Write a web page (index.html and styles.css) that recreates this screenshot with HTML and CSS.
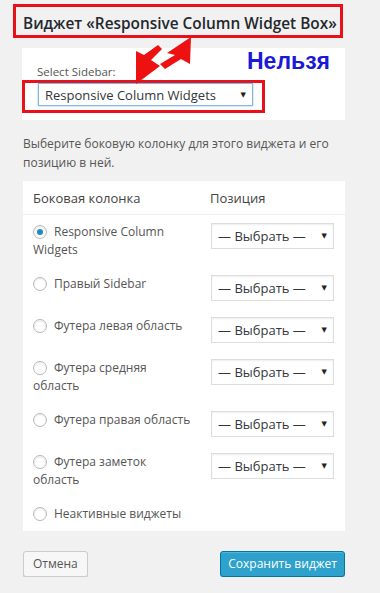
FILE: index.html
```html
<!DOCTYPE html>
<html lang="ru">
<head>
    <meta charset="UTF-8">
    <title>Виджет</title>
    <meta name="viewport" content="width=device-width, initial-scale=1.0">
    <link rel="stylesheet" href="styles.css">
</head>
<body>
    <div class="title-row">
        <h2 class="widget-title">Виджет «Responsive Column Widget Box»</h2>
    </div>

    <div class="sidebar-panel">
        <span class="note">Нельзя</span>
        <div class="field-label">Select Sidebar:</div>
        <div class="mark-box">
            <div class="select select-focus"><span>Responsive Column Widgets</span><span class="caret">▼</span></div>
        </div>
    </div>

    <p class="hint">Выберите боковую колонку для этого виджета и его позицию в ней.</p>

    <div class="positions">
        <div class="positions-head">
            <span>Боковая колонка</span>
            <span>Позиция</span>
        </div>
        <div class="positions-body">
            <div class="side"><span class="radio checked"></span>Responsive Column Widgets</div>
            <div class="select"><span>— Выбрать —</span><span class="caret">▼</span></div>

            <div class="side"><span class="radio"></span>Правый Sidebar</div>
            <div class="select"><span>— Выбрать —</span><span class="caret">▼</span></div>

            <div class="side"><span class="radio"></span>Футера левая область</div>
            <div class="select"><span>— Выбрать —</span><span class="caret">▼</span></div>

            <div class="side"><span class="radio"></span>Футера средняя область</div>
            <div class="select"><span>— Выбрать —</span><span class="caret">▼</span></div>

            <div class="side"><span class="radio"></span>Футера правая область</div>
            <div class="select"><span>— Выбрать —</span><span class="caret">▼</span></div>

            <div class="side"><span class="radio"></span>Футера заметок область</div>
            <div class="select"><span>— Выбрать —</span><span class="caret">▼</span></div>

            <div class="side"><span class="radio"></span>Неактивные виджеты</div>
        </div>
    </div>

    <div class="actions">
        <button class="btn">Отмена</button>
        <button class="btn btn-primary">Сохранить виджет</button>
    </div>

    <!-- red annotation arrows between title and sidebar select -->
    <svg class="arrows" width="380" height="120" viewBox="0 0 380 120">
        <polygon points="191,37 167,53 175,55 160,64 165,69 181,59 190,64" fill="#ee1111"/>
        <polygon points="136,84 136,51 144,55 158,45 162,49 151,60 160,66" fill="#ee1111"/>
    </svg>
</body>
</html>
```

FILE: styles.css
```css
body {
    margin: 0;
    background: #f1f1f1;
    font-family: 'Open Sans', 'DejaVu Sans', sans-serif;
    color: #555;
    position: relative;
}
.title-row {
    padding: 4px 0 0 13px;
}
.widget-title {
    margin: 0;
    width: 330px;
    height: 34px;
    box-sizing: border-box;
    border: 3px solid #e8111a;
    padding: 7px 0 0 7px;
    font-size: 15.4px;
    font-weight: 600;
    line-height: 20px;
    color: #23282d;
    white-space: nowrap;
}
.sidebar-panel {
    position: relative;
    margin: 10px 0 0 22px;
    width: 323px;
    height: 72px;
    box-sizing: border-box;
    padding-top: 16px;
    background: #fff;
}
.note {
    position: absolute;
    top: 0;
    right: 15px;
    font-family: 'Liberation Sans', sans-serif;
    font-weight: bold;
    font-size: 23px;
    line-height: 26px;
    color: #1a1ad6;
}
.field-label {
    padding-left: 15px;
    font-size: 11.5px;
    line-height: 16px;
    color: #555;
}
.mark-box {
    width: 243px;
    height: 33px;
    box-sizing: border-box;
    border: 3px solid #e8111a;
    padding: 0 9px 4px 13px;
}
.select {
    display: flex;
    justify-content: space-between;
    align-items: center;
    height: 26px;
    box-sizing: border-box;
    border: 1px solid #ddd;
    padding: 0 6px;
    background: #fff;
    color: #32373c;
    font-size: 13px;
    box-shadow: inset 0 1px 2px rgba(0,0,0,0.07);
}
.select-focus {
    height: 23px;
    border-color: #86b5dc;
    box-shadow: 0 0 2px rgba(30,140,190,0.5);
}
.caret {
    font-family: 'DejaVu Sans', sans-serif;
    font-size: 7px;
    color: #222;
}
.hint {
    margin: 14px 0 0 23px;
    width: 322px;
    font-size: 12px;
    line-height: 19px;
}
.positions {
    margin: 9px 0 0 23px;
    width: 322px;
    background: #fff;
}
.positions-head {
    display: grid;
    grid-template-columns: 177px 1fr;
    align-items: center;
    height: 33px;
    padding-left: 10px;
    border-bottom: 1px solid #eee;
    font-size: 13px;
    color: #444;
}
.positions-body {
    display: grid;
    grid-template-columns: 162px 123px;
    column-gap: 16px;
    row-gap: 16px;
    align-items: start;
    padding: 8px 11px 8px 10px;
}
.side {
    font-size: 12px;
    line-height: 18px;
}
.radio {
    display: inline-block;
    position: relative;
    width: 14px;
    height: 14px;
    box-sizing: border-box;
    margin-right: 7px;
    vertical-align: -3px;
    border: 1px solid #b4b9be;
    border-radius: 50%;
    box-shadow: inset 0 1px 2px rgba(0,0,0,0.1);
}
.radio.checked::before {
    content: "";
    position: absolute;
    left: 3px;
    top: 3px;
    width: 6px;
    height: 6px;
    border-radius: 50%;
    background: #1e8cbe;
}
.actions {
    display: flex;
    justify-content: space-between;
    margin: 20px 0 0 23px;
    width: 322px;
}
.btn {
    height: 26px;
    padding: 0 9px;
    font-family: inherit;
    font-size: 12px;
    line-height: 24px;
    color: #555;
    background: #f7f7f7;
    border: 1px solid #ccc;
    border-radius: 3px;
    box-shadow: 0 1px 0 #ccc;
}
.btn-primary {
    padding: 0 7px;
    color: #fff;
    background: #2ea2cc;
    border-color: #0074a2;
    box-shadow: inset 0 1px 0 rgba(120,200,230,0.5), 0 1px 0 rgba(0,0,0,0.15);
}
.arrows {
    position: absolute;
    top: 0;
    left: 0;
    pointer-events: none;
}
```
